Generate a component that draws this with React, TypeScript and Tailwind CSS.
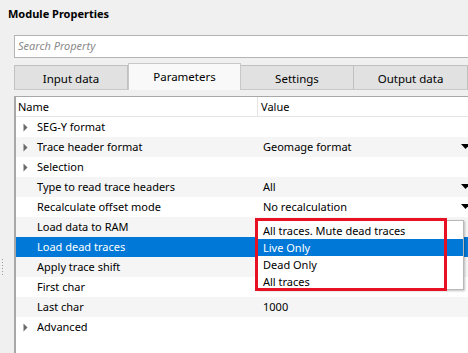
import React from 'react';

type Row = { name: string; value?: string; arrow?: boolean; combo?: boolean };

const rows: Row[] = [
    { name: 'SEG-Y format', arrow: true },
    { name: 'Trace header format', arrow: true, value: 'Geomage format', combo: true },
    { name: 'Selection', arrow: true },
    { name: 'Type to read trace headers', value: 'All', combo: true },
    { name: 'Recalculate offset mode', value: 'No recalculation', combo: true },
    { name: 'Load data to RAM' },
    { name: 'Load dead traces' },
    { name: 'Apply trace shift' },
    { name: 'First char' },
    { name: 'Last char', value: '1000' },
    { name: 'Advanced', arrow: true },
];

const options = ['All traces. Mute dead traces', 'Live Only', 'Dead Only', 'All traces'];

function Expander() {
    return (
        <svg width="5" height="9" viewBox="0 0 5 9" className="absolute left-[7px] top-[6px]">
            <path d="M0.5 0.5 L4.5 4.5 L0.5 8.5 Z" fill="#6a6a6a" />
        </svg>
    );
}

function ComboArrow() {
    return (
        <svg width="9" height="6" viewBox="0 0 9 6" className="absolute right-[2px] top-[7px]">
            <path d="M0 0 H9 L4.5 5 Z" fill="#000" />
        </svg>
    );
}

export default function App() {
    return (
        <div
            className="relative w-[468px] h-[353px] overflow-hidden bg-[#f0f0f0] text-[11px] text-black"
            style={{ fontFamily: '"Noto Sans", "Open Sans", sans-serif' }}
        >
            <div className="h-[28px] pl-[8px] pt-[4px] font-bold text-[11px] leading-[20px]">Module Properties</div>

            <div className="ml-[14px] mt-[7px] -mr-[4px] h-[23px] bg-white border border-[#b4b4b4] flex items-center pl-[3px] italic text-[#8a8a8a]">
                Search Property
            </div>

            <div className="ml-[14px] mt-[6px] h-[26px] flex items-end border-b border-[#c8c8c8] -mr-[4px] text-[11.5px]">
                <div className="w-[114px] h-[24px] pt-[2px] bg-[#e1e1e1] border border-[#c0c0c0] border-b-0 flex items-center justify-center">
                    Input data
                </div>
                <div className="w-[113px] h-[27px] -mb-px pb-px bg-[#f9f9f9] border border-[#c8c8c8] border-b-0 flex items-center justify-center">
                    Parameters
                </div>
                <div className="w-[113px] h-[24px] pt-[2px] bg-[#e1e1e1] border border-[#c0c0c0] border-b-0 border-l-0 flex items-center justify-center">
                    Settings
                </div>
                <div className="w-[114px] h-[24px] pt-[2px] bg-[#e1e1e1] border border-[#c0c0c0] border-b-0 border-l-0 flex items-center justify-center">
                    Output data
                </div>
            </div>

            <div className="ml-[14px] mt-[6px] -mr-[4px] h-[260px] bg-white border-l-2 border-t border-[#a8a8a8]">
                <div className="flex h-[20px] border-b border-[#e5e5e5] leading-[19px]">
                    <div className="w-[242px] pl-[2px] border-r border-[#e5e5e5]">Name</div>
                    <div className="pl-[3px]">Value</div>
                </div>
                {rows.map((r, i) => {
                    const selected = r.name === 'Load dead traces';
                    const alt = i % 2 === 1;
                    return (
                        <div
                            key={r.name}
                            className={
                                'relative flex h-[20px] leading-[20px] ' +
                                (selected ? 'bg-[#0078d7] text-white' : alt ? 'bg-[#f5f5f5]' : 'bg-white')
                            }
                        >
                            {r.arrow && <Expander />}
                            <div className="w-[242px] pl-[21px] shrink-0">{r.name}</div>
                            <div className="relative flex-1 pl-[5px] pr-[6px]">
                                {r.value}
                                {r.combo && <ComboArrow />}
                            </div>
                        </div>
                    );
                })}
            </div>

            <div className="absolute left-[2px] top-[259px] flex flex-col gap-[2px]">
                {[0, 1, 2, 3, 4, 5].map((d) => (
                    <div key={d} className="w-px h-px bg-[#9a9a9a]" />
                ))}
            </div>

            <div className="absolute left-[257px] top-[220px] w-[207px] h-[70px] bg-white border border-[#b8b8b8] shadow-[1px_1px_2px_rgba(0,0,0,0.25)] pt-px">
                {options.map((o) => (
                    <div
                        key={o}
                        className={
                            'h-[17px] leading-[17px] pl-[5px] ' + (o === 'Live Only' ? 'bg-[#0078d7] text-white' : '')
                        }
                    >
                        {o}
                    </div>
                ))}
            </div>
            <div className="absolute left-[255px] top-[218px] w-[192px] h-[73px] border-[3px] border-[#e81123]" />
        </div>
    );
}
